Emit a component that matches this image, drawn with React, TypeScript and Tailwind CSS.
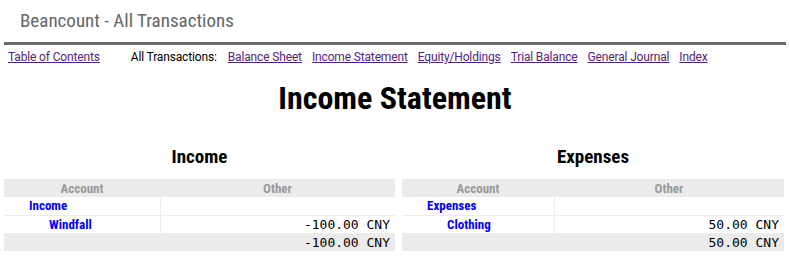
const links = ['Balance Sheet', 'Income Statement', 'Equity/Holdings', 'Trial Balance', 'General Journal', 'Index']

type Row = { name: string; depth: number; amount?: string }

function Table({ title, rows, total, accW }: { title: string; rows: Row[]; total: string; accW: string }) {
  return (
    <div className="flex flex-col">
      <h2 className="text-center text-[19px] font-bold leading-[22px] text-black font-stretch-semi-condensed">{title}</h2>
      <table className="mt-[11px] w-full border-collapse text-[13px] leading-[17px] font-stretch-85%">
        <thead>
          <tr className="h-[18px] bg-[#ebebeb] text-[#999]">
            <th className={`${accW} font-bold`}>Account</th>
            <th className="font-bold">Other</th>
          </tr>
        </thead>
        <tbody>
          {rows.map((r) => (
            <tr key={r.name} className="h-[18px] border-b border-[#ececec]">
              <td className={`border-r border-[#ececec] font-bold text-[#0000ff] ${r.depth ? 'pl-[45px]' : 'pl-[25px]'}`}>
                {r.name}
              </td>
              <td className="pr-[5px] text-right font-['DejaVu_Sans_Mono',monospace] text-[13px] leading-[17px]">{r.amount}</td>
            </tr>
          ))}
          <tr className="h-[18px] bg-[#ebebeb]">
            <td />
            <td className="pr-[5px] text-right font-['DejaVu_Sans_Mono',monospace] text-[13px] leading-[17px]">{total}</td>
          </tr>
        </tbody>
      </table>
    </div>
  )
}

export default function App() {
  return (
    <div className="h-[267px] w-[790px] bg-white px-[4px] font-['Roboto',sans-serif] text-black">
      <div className="flex h-[42px] items-center pl-[16px] text-[19px] text-[#666] font-stretch-condensed">Beancount - All Transactions</div>
      <div className="h-[3px] w-[782px] bg-[#6b6b6b]" />
      <nav className="flex h-[24px] items-center pl-[4px] text-[12px] tracking-[-0.15px]">
        <a href="#" className="text-[#551a8b] underline">Table of Contents</a>
        <span className="ml-[31px] mr-[11px]">All Transactions:</span>
        <div className="flex gap-[10px]">
          {links.map((l) => (
            <a key={l} href="#" className="text-[#551a8b] underline">{l}</a>
          ))}
        </div>
      </nav>
      <h1 className="mt-[10px] text-center text-[32px] font-bold leading-[38px] font-stretch-condensed">Income Statement</h1>
      <div className="mt-[29px] flex gap-[7px]">
        <div className="w-[391px]">
          <Table
            title="Income"
            accW="w-[156px]"
            rows={[
              { name: 'Income', depth: 0 },
              { name: 'Windfall', depth: 1, amount: '-100.00 CNY' },
            ]}
            total="-100.00 CNY"
          />
        </div>
        <div className="w-[382px]">
          <Table
            title="Expenses"
            accW="w-[152px]"
            rows={[
              { name: 'Expenses', depth: 0 },
              { name: 'Clothing', depth: 1, amount: '50.00 CNY' },
            ]}
            total="50.00 CNY"
          />
        </div>
      </div>
    </div>
  )
}
